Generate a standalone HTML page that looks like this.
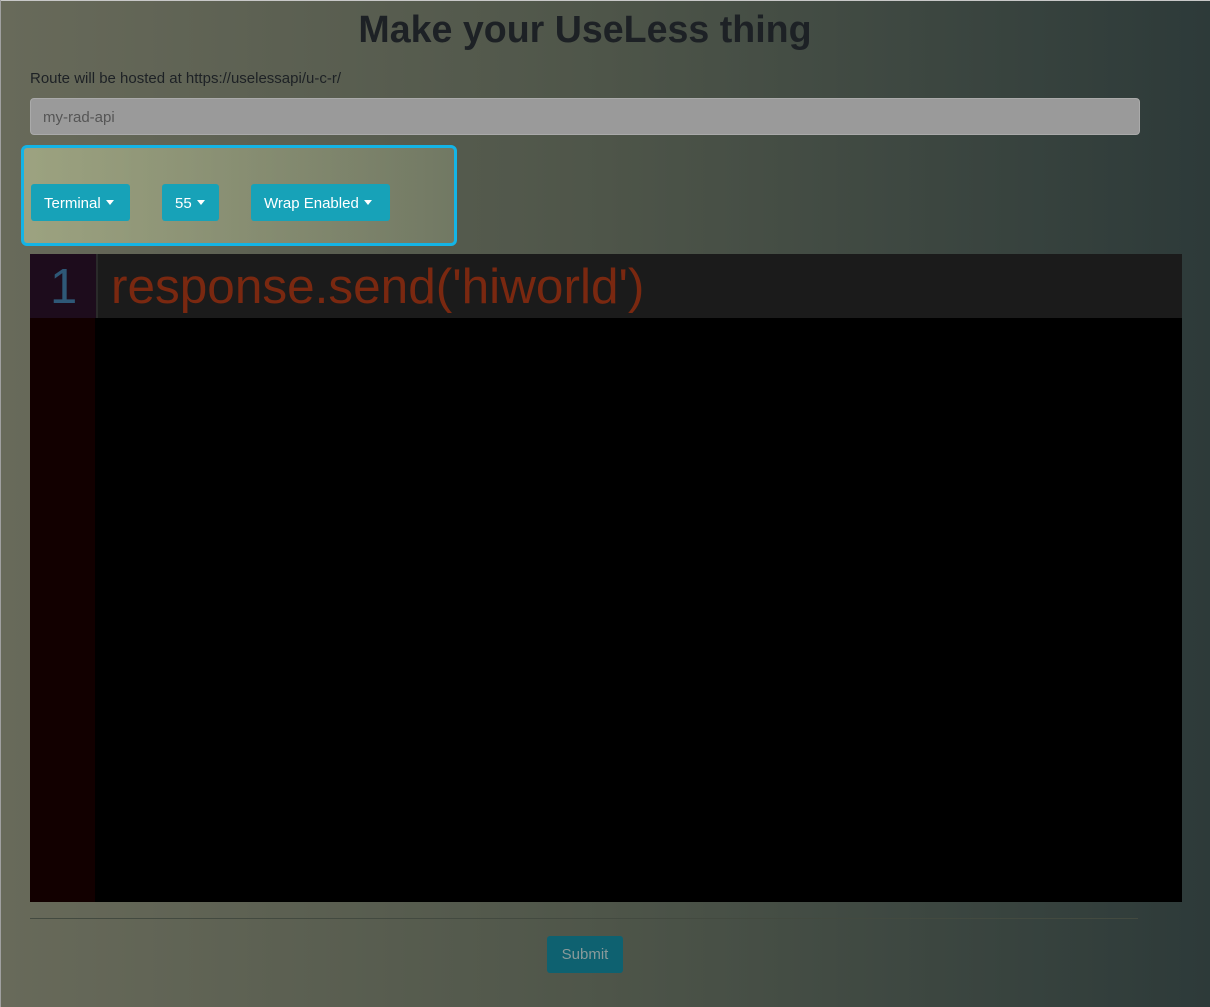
<!DOCTYPE html>
<html><head><style>
body{margin:0;width:1210px;height:1007px;overflow:hidden;background:linear-gradient(90deg,#686a5a 0%,#4e5549 50%,#2d3a39 100%);font-family:"Liberation Sans",sans-serif;position:relative}
.a{position:absolute}
h1{position:absolute;margin:0;left:0;width:1170px;text-align:center;top:8px;font-size:37.6px;font-weight:bold;color:#1d2125}
.btn{position:absolute;top:184px;height:37px;background:#17a2b8;color:#fff;font-size:15px;line-height:39px;border-radius:3px;padding:0 13px;box-sizing:border-box}
.btn:after{content:"";display:inline-block;margin-left:5px;vertical-align:3px;border-top:5px solid #fff;border-left:4.5px solid transparent;border-right:4.5px solid transparent}
</style></head><body>
<div class="a" style="left:0;top:0;width:1210px;height:1px;background:#c8c8c8"></div>
<div class="a" style="left:0;top:0;width:1px;height:1007px;background:#a0a0a0"></div>
<h1>Make your UseLess thing</h1>
<div class="a" style="left:30px;top:70px;font-size:15px;color:#1d2125">Route will be hosted at https://uselessapi/u-c-r/</div>
<div class="a" style="left:30px;top:98px;width:1110px;height:37px;background:#9a9a9a;border-radius:4px;box-sizing:border-box;border:1px solid #aaa;padding-left:12px;line-height:37px;color:#555;font-size:15px">my-rad-api</div>
<div class="a" style="left:21px;top:145px;width:436px;height:101px;border:3px solid #14b4e6;border-radius:6px;box-sizing:border-box;background:linear-gradient(90deg,rgba(200,210,160,.55),rgba(180,190,150,.3))"></div>
<div class="btn" style="left:31px;width:99px">Terminal</div>
<div class="btn" style="left:162px;width:57px">55</div>
<div class="btn" style="left:251px;width:139px">Wrap Enabled</div>
<div class="a" style="left:30px;top:254px;width:1152px;height:648px;background:#000"></div>
<div class="a" style="left:30px;top:318px;width:65px;height:584px;background:#120000"></div>
<div class="a" style="left:30px;top:254px;width:1152px;height:64px;background:#1b1b1b"></div>
<div class="a" style="left:30px;top:254px;width:66px;height:64px;background:#1d0c1c;border-right:2px solid #2a2a2a"></div>
<div class="a" style="left:50px;top:260px;font-size:49px;color:#2e5877;line-height:54px">1</div>
<div class="a" style="left:111px;top:260px;font-size:49.5px;color:#7a2810;line-height:54px">response.send('hiworld')</div>
<div class="a" style="left:30px;top:918px;width:1108px;height:1px;background:#434a40"></div>
<div class="a" style="left:547px;top:936px;width:76px;height:37px;background:#0e6170;border-radius:3px;color:#8a9a9a;font-size:15px;text-align:center;line-height:38px">Submit</div>
</body></html>
